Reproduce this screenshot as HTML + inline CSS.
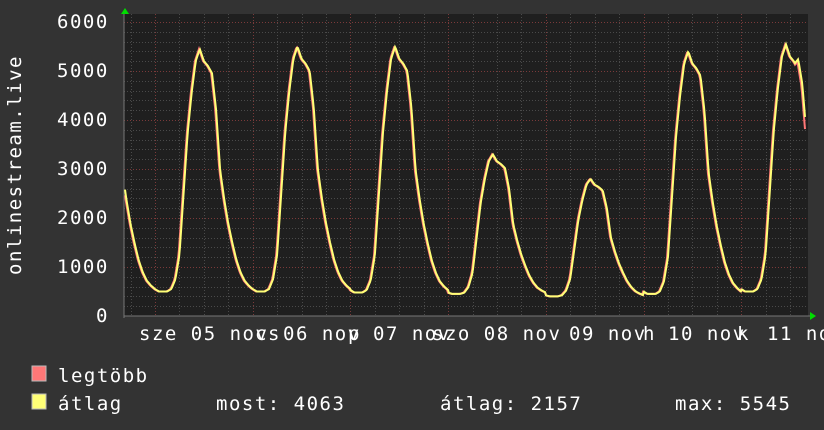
<!DOCTYPE html>
<html><head><meta charset="utf-8"><style>
html,body{margin:0;padding:0;background:#333333;}
svg{display:block}
text{font-family:"DejaVu Sans Mono","Liberation Mono",monospace;fill:#ffffff;font-size:19px;letter-spacing:1.5px;white-space:pre;}
</style></head><body>
<svg id="g" width="824" height="430" xmlns="http://www.w3.org/2000/svg" xml:space="preserve">
<rect x="0" y="0" width="824" height="430" fill="#333333"/>
<rect x="124" y="14" width="684" height="302" fill="#1f1f1f"/>
<g id="grid"></g>
<line x1="124" y1="316" x2="810" y2="316" stroke="#777" stroke-width="1"/>
<line x1="124" y1="12" x2="124" y2="318" stroke="#777" stroke-width="1"/>
<polygon points="121,14 125,8 129,14" fill="#00dd00"/>
<polygon points="810,312 816,316 810,320" fill="#00dd00"/>
<g id="curves"></g>
<text x="57" y="28">6000</text>
<text x="57" y="77">5000</text>
<text x="57" y="126">4000</text>
<text x="57" y="175">3000</text>
<text x="57" y="224">2000</text>
<text x="57" y="273">1000</text>
<text x="96" y="322">0</text>
<text transform="translate(21,275) rotate(-90)">onlinestream.live</text>
<text x="139" y="340">sze 05 nov</text>
<text x="255" y="340">cs</text>
<text x="283" y="340">06 nov</text>
<text x="348" y="340">p</text>
<text x="373" y="340">07 nov</text>
<text x="432" y="340">szo 08 nov</text>
<text x="569" y="340">09 nov</text>
<text x="643" y="340">h</text>
<text x="668" y="340">10 nov</text>
<text x="737" y="340">k</text>
<text x="767" y="340">11 no</text>
<rect x="32" y="366" width="14" height="15" fill="#ff7777" stroke="#bbb" stroke-width="1"/>
<rect x="32" y="394" width="14" height="15" fill="#ffff77" stroke="#bbb" stroke-width="1"/>
<text x="58" y="382">legtöbb</text>
<text x="58" y="410">átlag</text>
<text x="216" y="410">most: 4063</text>
<text x="440" y="410">átlag: 2157</text>
<text x="675" y="410">max: 5545</text>
</svg>
<script>
(function(){
var NS="http://www.w3.org/2000/svg";
var grid=document.getElementById('grid');
function ln(x1,y1,x2,y2,c){var l=document.createElementNS(NS,'line');l.setAttribute('x1',x1);l.setAttribute('y1',y1);l.setAttribute('x2',x2);l.setAttribute('y2',y2);l.setAttribute('stroke',c);l.setAttribute('stroke-width','1');l.setAttribute('stroke-dasharray','1,2');grid.appendChild(l);}
for(var v=200;v<=6000;v+=200){var y=316-v*0.049;y=Math.round(y)+0.5;ln(124,y,808,y,(v%1000==0)?'#7a3a3a':'#4a4a4a');}
var DW=97.7;
for(var k=-2;k<30;k++){var x=155+k*DW/4;if(x<125||x>808)continue;var maj=(k%4==0);ln(Math.round(x)+0.5,14,Math.round(x)+0.5,316,maj?'#7a3a3a':'#4a4a4a');}
var F=[0.01,0,0,0,0.01,0.05,0.15,0.4,0.65,0.82,0.95,1,0.95,0.93,0.9,0.75,0.5,0.38,0.28,0.2,0.13,0.08,0.045,0.025,0.01];
var P={'-1':5400,0:5450,1:5500,2:5500,3:3300,4:2800,5:5400,6:5545};
var B={'-1':500,0:500,1:500,2:480,3:450,4:400,5:450,6:500};
function val(x){var t=(x-155)/DW;var d=Math.floor(t);var h=(t-d)*24;var i=Math.floor(h),fr=h-i;var f=F[i]+(F[i+1]-F[i])*fr;var p=P[d]||5400,b=B[d]||500;return b+f*(p-b);}
function path(off){var s='';for(var x=125;x<=805;x++){var v=val(x+off);if(x>795)v=v+(4063-val(805))*(x-795)/10;var y=316-v*0.049;s+=(x==125?'M':'L')+x+','+y.toFixed(1);}return s;}
var c=document.getElementById('curves');
function add(d,col){var p=document.createElementNS(NS,'path');p.setAttribute('d',d);p.setAttribute('fill','none');p.setAttribute('stroke',col);p.setAttribute('stroke-width','2');c.appendChild(p);}
add(path(0.8),'#ff7777');
add(path(0),'#ffff77');
})();
</script>
</body></html>
